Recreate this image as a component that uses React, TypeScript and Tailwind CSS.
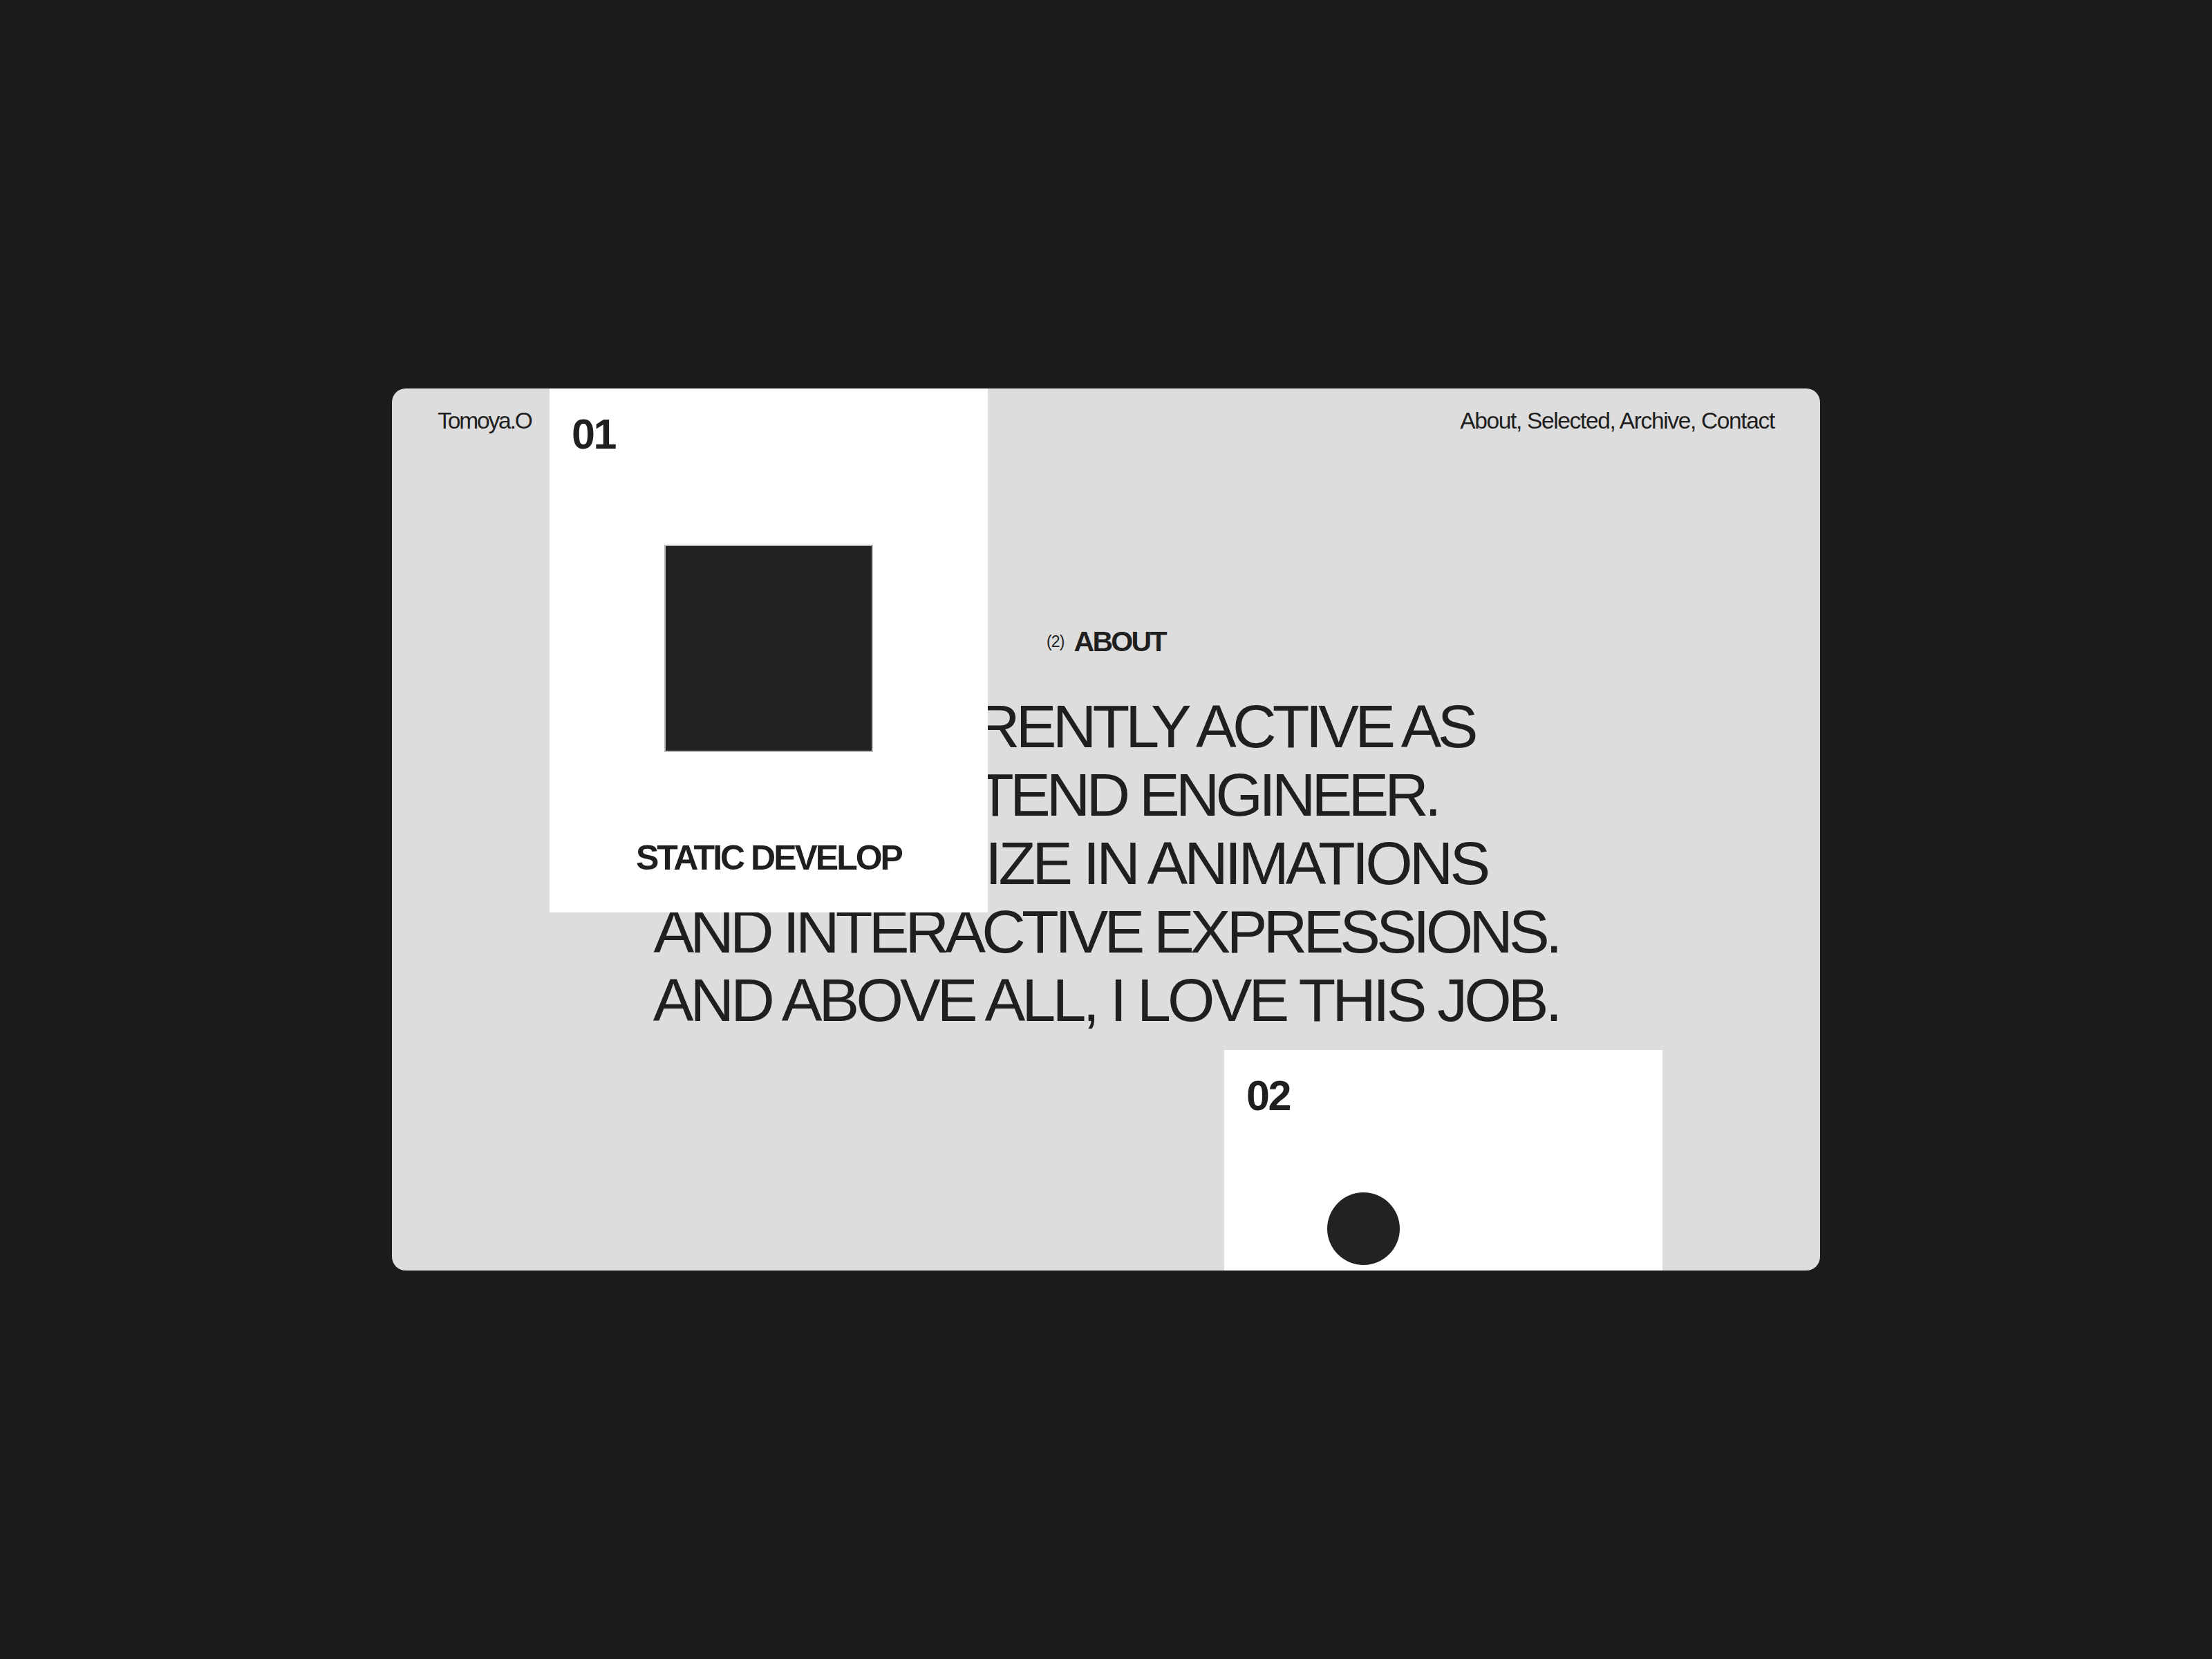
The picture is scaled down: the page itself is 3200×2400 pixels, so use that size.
const lines = [
  { text: 'I AM CURRENTLY ACTIVE AS', cls: 'tracking-[-0.066em]' },
  { text: 'A FRONTEND ENGINEER.', cls: 'tracking-[-0.066em]' },
  { text: 'I SPECIALIZE IN ANIMATIONS', cls: 'tracking-[-0.056em]' },
  { text: 'AND INTERACTIVE EXPRESSIONS.', cls: 'tracking-[-0.066em]' },
  { text: 'AND ABOVE ALL, I LOVE THIS JOB.', cls: 'tracking-[-0.055em]' },
];

const App = () => {
  return (
    <div className="min-h-screen bg-[#1b1b1b] flex items-center justify-center font-['Liberation_Sans',Arial,sans-serif] text-[#1f1f1f]">
      <div className="relative w-[2066px] h-[1276px] bg-[#dddddd] rounded-[20px] overflow-hidden">
        {/* Header */}
        <header className="flex justify-between px-[66px] pt-[30px] text-[33.5px] leading-none">
          <span className="tracking-[-0.063em]">Tomoya.O</span>
          <nav className="tracking-[-0.04em]">About, Selected, Archive, Contact</nav>
        </header>

        {/* About */}
        <section className="flex flex-col items-center mt-[282px]">
          <div className="flex items-center gap-[14px] h-[41px]">
            <span className="text-[23px] leading-none tracking-[-0.04em]">(2)</span>
            <h2 className="text-[41px] font-bold leading-none tracking-[-0.065em]">ABOUT</h2>
          </div>
          <p className="mt-[52px] text-center text-[88px] leading-[99px]">
            {lines.map((line) => (
              <span key={line.text} className={`block ${line.cls}`}>
                {line.text}
              </span>
            ))}
          </p>
        </section>

        {/* Card 01 */}
        <div className="absolute left-[228px] top-0 w-[634px] h-[758px] bg-white flex flex-col">
          <div className="pt-[36px] pl-[32px] text-[61px] font-bold leading-none tracking-[-0.04em]">01</div>
          <div className="mt-[129px] mx-auto w-[302px] h-[300px] bg-[#222222] border-2 border-[#b9b9b9]" />
          <div className="mt-[128px] text-center text-[50px] font-bold leading-none tracking-[-0.06em]">
            STATIC DEVELOP
          </div>
        </div>

        {/* Card 02 */}
        <div className="absolute left-[1204px] top-[957px] w-[634px] h-[758px] bg-white flex flex-col">
          <div className="pt-[36px] pl-[32px] text-[61px] font-bold leading-none tracking-[-0.04em]">02</div>
          <div className="mt-[109px] ml-[149px] w-[105px] h-[105px] rounded-full bg-[#222222]" />
        </div>
      </div>
    </div>
  );
};

export default App;
